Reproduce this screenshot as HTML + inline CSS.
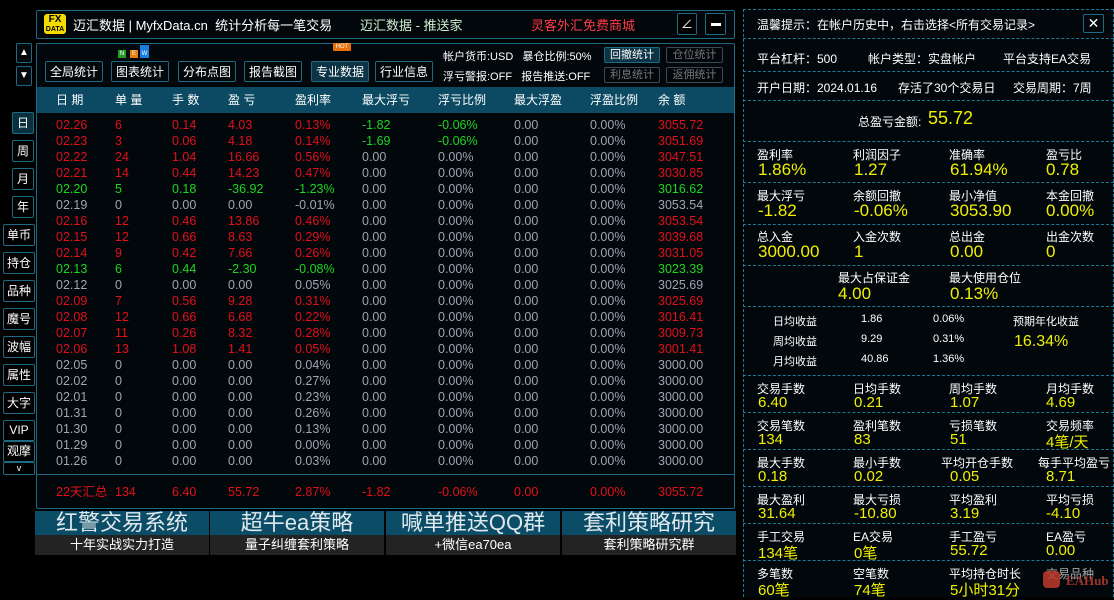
<!DOCTYPE html><html><head><meta charset="utf-8"><style>
*{margin:0;padding:0;box-sizing:border-box}
body{width:1114px;height:597px;background:#000;position:relative;overflow:hidden;font-family:"Liberation Sans","Noto Sans CJK SC",sans-serif;color:#e8eef2;font-size:12px}
.a{position:absolute;white-space:nowrap}
.bx{position:absolute;border:1px solid #1d6a82;border-radius:2px}
.btn{position:absolute;border:1px solid #1d6a82;border-radius:2px;background:#02070b;color:#fff;font-size:12px;text-align:center;line-height:20px}
.tab{position:absolute;border:1px solid #1d6a82;border-radius:2px;background:#000;color:#fff;font-size:12px;text-align:center}
table{position:absolute;left:56px;border-collapse:collapse;table-layout:fixed;font-size:12.5px}
td{height:16px;padding:0;white-space:nowrap;color:#9ba7b2;line-height:16px}
col.c1{width:59px}col.c2{width:57px}col.c3{width:56px}col.c4{width:67px}col.c5{width:67px}col.c6{width:76px}col.c7{width:76px}col.c8{width:76px}col.c9{width:68px}col.c10{width:70px}
tr.r td.k{color:#e3101a}tr.g td.k{color:#1fd61f}
td.gn{color:#1fd61f}
.rp{position:absolute;left:743px;width:371px;border-left:1px dashed #1d7a96;border-right:1px dashed #1d7a96}
.sec{position:absolute;left:743px;width:371px;border-top:1px dashed #1d7a96}
.lb{position:absolute;font-size:12px;color:#fff;white-space:nowrap}
.vl{position:absolute;font-size:17px;color:#f0f000;white-space:nowrap}
.ban{position:absolute;top:511px;width:174px;height:24px;background:#0b4c67;color:#dfe8ec;font-size:22px;text-align:center;line-height:24px}
.sub{position:absolute;top:535px;width:174px;height:20px;background:#232323;color:#fff;font-size:13px;text-align:center;line-height:20px}
</style></head><body>
<div class="bx" style="left:36px;top:10px;width:699px;height:29px;background:#02070b"></div>
<div class="a" style="left:44px;top:14px;width:22px;height:20px;background:#f4dc00;border-radius:3px;color:#000;font-weight:bold;text-align:center;line-height:9px;font-size:10px;padding-top:1px">FX<br><span style="font-size:7px">DATA</span></div>
<div class="a" style="left:73px;top:15px;font-size:13px;color:#fff">迈汇数据 | MyfxData.cn&nbsp; 统计分析每一笔交易</div>
<div class="a" style="left:360px;top:15px;font-size:13px;color:#cfeecf">迈汇数据 - 推送家</div>
<div class="a" style="left:531px;top:15px;font-size:13px;color:#ff3b45">灵客外汇免费商城</div>
<div class="bx" style="left:677px;top:13px;width:20px;height:22px;background:#000;color:#fff;text-align:center;line-height:20px">∠</div>
<div class="bx" style="left:705px;top:13px;width:21px;height:22px;background:#000"><div style="position:absolute;left:5px;top:9px;width:10px;height:3px;background:#fff"></div></div>
<div class="btn" style="left:16px;top:43px;width:16px;height:20px;line-height:18px;font-size:10px">▲</div>
<div class="btn" style="left:16px;top:66px;width:16px;height:20px;line-height:18px;font-size:10px">▼</div>
<div class="bx" style="left:36px;top:43px;width:699px;height:466px;background:#02070b"></div>
<div class="btn" style="left:45px;top:61px;width:58px;height:21px">全局统计</div>
<div class="btn" style="left:111px;top:61px;width:58px;height:21px">图表统计</div>
<div class="btn" style="left:178px;top:61px;width:58px;height:21px">分布点图</div>
<div class="btn" style="left:244px;top:61px;width:58px;height:21px">报告截图</div>
<div class="btn" style="left:311px;top:61px;width:58px;height:21px;background:#0c3444">专业数据</div>
<div class="btn" style="left:375px;top:61px;width:58px;height:21px">行业信息</div>
<div class="a" style="left:118px;top:50px;width:8px;height:8px;background:#2a9a2a;color:#fff;font-size:6px;line-height:8px;text-align:center">N</div>
<div class="a" style="left:130px;top:50px;width:8px;height:8px;background:#e87d10;color:#fff;font-size:6px;line-height:8px;text-align:center">E</div>
<div class="a" style="left:140px;top:45px;width:9px;height:13px;background:#1a7ee0;color:#fff;font-size:6px;line-height:18px;text-align:center">W</div>
<div class="a" style="left:333px;top:43px;width:18px;height:8px;background:#e8700c;color:#fff;font-size:6px;line-height:8px;text-align:center;border-radius:1px">HOT</div>
<div class="a" style="left:443px;top:48px;font-size:11px;color:#fff">帐户货币:USD&nbsp;&nbsp; 暴仓比例:50%</div>
<div class="a" style="left:443px;top:68px;font-size:11px;color:#fff">浮亏警报:OFF&nbsp;&nbsp; 报告推送:OFF</div>
<div class="btn" style="left:604px;top:47px;width:56px;height:16px;line-height:14px;font-size:11px;background:#0c3444">回撤统计</div>
<div class="btn" style="left:666px;top:47px;width:57px;height:16px;line-height:14px;font-size:11px;color:#777;border-color:#3a4a50">仓位统计</div>
<div class="btn" style="left:604px;top:67px;width:56px;height:16px;line-height:14px;font-size:11px;color:#777;border-color:#3a4a50">利息统计</div>
<div class="btn" style="left:666px;top:67px;width:57px;height:16px;line-height:14px;font-size:11px;color:#777;border-color:#3a4a50">返佣统计</div>
<div class="a" style="left:37px;top:87px;width:697px;height:26px;background:#0b4a62"></div>
<table style="top:92px;font-size:12px"><colgroup><col class="c1"><col class="c2"><col class="c3"><col class="c4"><col class="c5"><col class="c6"><col class="c7"><col class="c8"><col class="c9"><col class="c10"></colgroup>
<tr><td style="color:#fff">日 期</td><td style="color:#fff">单 量</td><td style="color:#fff">手 数</td><td style="color:#fff">盈 亏</td><td style="color:#fff">盈利率</td><td style="color:#fff">最大浮亏</td><td style="color:#fff">浮亏比例</td><td style="color:#fff">最大浮盈</td><td style="color:#fff">浮盈比例</td><td style="color:#fff">余 额</td></tr></table>
<table style="top:117px"><colgroup><col class="c1"><col class="c2"><col class="c3"><col class="c4"><col class="c5"><col class="c6"><col class="c7"><col class="c8"><col class="c9"><col class="c10"></colgroup>
<tr class="r"><td class="k">02.26</td><td class="k">6</td><td class="k">0.14</td><td class="k">4.03</td><td class="k">0.13%</td><td class="gn">-1.82</td><td class="gn">-0.06%</td><td>0.00</td><td>0.00%</td><td class="k">3055.72</td></tr>
<tr class="r"><td class="k">02.23</td><td class="k">3</td><td class="k">0.06</td><td class="k">4.18</td><td class="k">0.14%</td><td class="gn">-1.69</td><td class="gn">-0.06%</td><td>0.00</td><td>0.00%</td><td class="k">3051.69</td></tr>
<tr class="r"><td class="k">02.22</td><td class="k">24</td><td class="k">1.04</td><td class="k">16.66</td><td class="k">0.56%</td><td>0.00</td><td>0.00%</td><td>0.00</td><td>0.00%</td><td class="k">3047.51</td></tr>
<tr class="r"><td class="k">02.21</td><td class="k">14</td><td class="k">0.44</td><td class="k">14.23</td><td class="k">0.47%</td><td>0.00</td><td>0.00%</td><td>0.00</td><td>0.00%</td><td class="k">3030.85</td></tr>
<tr class="g"><td class="k">02.20</td><td class="k">5</td><td class="k">0.18</td><td class="k">-36.92</td><td class="k">-1.23%</td><td>0.00</td><td>0.00%</td><td>0.00</td><td>0.00%</td><td class="k">3016.62</td></tr>
<tr><td>02.19</td><td>0</td><td>0.00</td><td>0.00</td><td>-0.01%</td><td>0.00</td><td>0.00%</td><td>0.00</td><td>0.00%</td><td>3053.54</td></tr>
<tr class="r"><td class="k">02.16</td><td class="k">12</td><td class="k">0.46</td><td class="k">13.86</td><td class="k">0.46%</td><td>0.00</td><td>0.00%</td><td>0.00</td><td>0.00%</td><td class="k">3053.54</td></tr>
<tr class="r"><td class="k">02.15</td><td class="k">12</td><td class="k">0.66</td><td class="k">8.63</td><td class="k">0.29%</td><td>0.00</td><td>0.00%</td><td>0.00</td><td>0.00%</td><td class="k">3039.68</td></tr>
<tr class="r"><td class="k">02.14</td><td class="k">9</td><td class="k">0.42</td><td class="k">7.66</td><td class="k">0.26%</td><td>0.00</td><td>0.00%</td><td>0.00</td><td>0.00%</td><td class="k">3031.05</td></tr>
<tr class="g"><td class="k">02.13</td><td class="k">6</td><td class="k">0.44</td><td class="k">-2.30</td><td class="k">-0.08%</td><td>0.00</td><td>0.00%</td><td>0.00</td><td>0.00%</td><td class="k">3023.39</td></tr>
<tr><td>02.12</td><td>0</td><td>0.00</td><td>0.00</td><td>0.05%</td><td>0.00</td><td>0.00%</td><td>0.00</td><td>0.00%</td><td>3025.69</td></tr>
<tr class="r"><td class="k">02.09</td><td class="k">7</td><td class="k">0.56</td><td class="k">9.28</td><td class="k">0.31%</td><td>0.00</td><td>0.00%</td><td>0.00</td><td>0.00%</td><td class="k">3025.69</td></tr>
<tr class="r"><td class="k">02.08</td><td class="k">12</td><td class="k">0.66</td><td class="k">6.68</td><td class="k">0.22%</td><td>0.00</td><td>0.00%</td><td>0.00</td><td>0.00%</td><td class="k">3016.41</td></tr>
<tr class="r"><td class="k">02.07</td><td class="k">11</td><td class="k">0.26</td><td class="k">8.32</td><td class="k">0.28%</td><td>0.00</td><td>0.00%</td><td>0.00</td><td>0.00%</td><td class="k">3009.73</td></tr>
<tr class="r"><td class="k">02.06</td><td class="k">13</td><td class="k">1.08</td><td class="k">1.41</td><td class="k">0.05%</td><td>0.00</td><td>0.00%</td><td>0.00</td><td>0.00%</td><td class="k">3001.41</td></tr>
<tr><td>02.05</td><td>0</td><td>0.00</td><td>0.00</td><td>0.04%</td><td>0.00</td><td>0.00%</td><td>0.00</td><td>0.00%</td><td>3000.00</td></tr>
<tr><td>02.02</td><td>0</td><td>0.00</td><td>0.00</td><td>0.27%</td><td>0.00</td><td>0.00%</td><td>0.00</td><td>0.00%</td><td>3000.00</td></tr>
<tr><td>02.01</td><td>0</td><td>0.00</td><td>0.00</td><td>0.23%</td><td>0.00</td><td>0.00%</td><td>0.00</td><td>0.00%</td><td>3000.00</td></tr>
<tr><td>01.31</td><td>0</td><td>0.00</td><td>0.00</td><td>0.26%</td><td>0.00</td><td>0.00%</td><td>0.00</td><td>0.00%</td><td>3000.00</td></tr>
<tr><td>01.30</td><td>0</td><td>0.00</td><td>0.00</td><td>0.13%</td><td>0.00</td><td>0.00%</td><td>0.00</td><td>0.00%</td><td>3000.00</td></tr>
<tr><td>01.29</td><td>0</td><td>0.00</td><td>0.00</td><td>0.00%</td><td>0.00</td><td>0.00%</td><td>0.00</td><td>0.00%</td><td>3000.00</td></tr>
<tr><td>01.26</td><td>0</td><td>0.00</td><td>0.00</td><td>0.03%</td><td>0.00</td><td>0.00%</td><td>0.00</td><td>0.00%</td><td>3000.00</td></tr>
</table>
<div class="a" style="left:37px;top:474px;width:697px;border-top:1px solid #1d6a82"></div>
<table style="top:484px"><colgroup><col class="c1"><col class="c2"><col class="c3"><col class="c4"><col class="c5"><col class="c6"><col class="c7"><col class="c8"><col class="c9"><col class="c10"></colgroup>
<tr class="r"><td class="k">22天汇总</td><td class="k">134</td><td class="k">6.40</td><td class="k">55.72</td><td class="k">2.87%</td><td class="k">-1.82</td><td class="k">-0.06%</td><td class="k">0.00</td><td class="k">0.00%</td><td class="k">3055.72</td></tr></table>
<div class="tab" style="left:12px;top:112px;width:22px;height:22px;line-height:20px;background:#0a3040">日</div>
<div class="tab" style="left:12px;top:140px;width:22px;height:22px;line-height:20px">周</div>
<div class="tab" style="left:12px;top:168px;width:22px;height:22px;line-height:20px">月</div>
<div class="tab" style="left:12px;top:196px;width:22px;height:22px;line-height:20px">年</div>
<div class="tab" style="left:3px;top:224px;width:32px;height:22px;line-height:20px">单币</div>
<div class="tab" style="left:3px;top:252px;width:32px;height:22px;line-height:20px">持仓</div>
<div class="tab" style="left:3px;top:280px;width:32px;height:22px;line-height:20px">品种</div>
<div class="tab" style="left:3px;top:308px;width:32px;height:22px;line-height:20px">魔号</div>
<div class="tab" style="left:3px;top:336px;width:32px;height:22px;line-height:20px">波幅</div>
<div class="tab" style="left:3px;top:364px;width:32px;height:22px;line-height:20px">属性</div>
<div class="tab" style="left:3px;top:392px;width:32px;height:22px;line-height:20px">大字</div>
<div class="tab" style="left:3px;top:420px;width:32px;height:21px;line-height:19px">VIP</div>
<div class="tab" style="left:3px;top:441px;width:32px;height:21px;line-height:19px">观摩</div>
<div class="tab" style="left:3px;top:462px;width:32px;height:13px;line-height:10px;font-size:9px">v</div>
<div class="ban" style="left:35px">红警交易系统</div><div class="sub" style="left:35px">十年实战实力打造</div>
<div class="ban" style="left:210px">超牛ea策略</div><div class="sub" style="left:210px">量子纠缠套利策略</div>
<div class="ban" style="left:386px">喊单推送QQ群</div><div class="sub" style="left:386px">+微信ea70ea</div>
<div class="ban" style="left:562px">套利策略研究</div><div class="sub" style="left:562px">套利策略研究群</div>
<div class="rp" style="top:9px;height:588px;background:#02070b"></div>
<div class="sec" style="top:9px"></div>
<div class="lb" style="left:757px;top:16px">温馨提示：在帐户历史中，右击选择&lt;所有交易记录&gt;</div>
<div class="bx" style="left:1083px;top:14px;width:21px;height:19px;color:#fff;text-align:center;line-height:17px;font-size:14px">✕</div>
<div class="sec" style="top:38px"></div>
<div class="lb" style="left:757px;top:50px">平台杠杆：500</div>
<div class="lb" style="left:868px;top:50px">帐户类型：实盘帐户</div>
<div class="lb" style="left:1003px;top:50px">平台支持EA交易</div>
<div class="sec" style="top:71px"></div>
<div class="lb" style="left:757px;top:79px">开户日期：2024.01.16</div>
<div class="lb" style="left:898px;top:79px">存活了30个交易日</div>
<div class="lb" style="left:1013px;top:79px">交易周期：7周</div>
<div class="sec" style="top:100px"></div>
<div class="lb" style="left:858px;top:113px">总盈亏金额:</div>
<div class="vl" style="left:928px;top:108px;font-size:18px">55.72</div>
<div class="sec" style="top:141px"></div>
<div class="lb" style="left:757px;top:146px">盈利率</div><div class="vl" style="left:758px;top:160px">1.86%</div>
<div class="lb" style="left:853px;top:146px">利润因子</div><div class="vl" style="left:854px;top:160px">1.27</div>
<div class="lb" style="left:949px;top:146px">准确率</div><div class="vl" style="left:950px;top:160px">61.94%</div>
<div class="lb" style="left:1046px;top:146px">盈亏比</div><div class="vl" style="left:1046px;top:160px">0.78</div>
<div class="sec" style="top:182px"></div>
<div class="lb" style="left:757px;top:187px">最大浮亏</div><div class="vl" style="left:758px;top:201px">-1.82</div>
<div class="lb" style="left:853px;top:187px">余额回撤</div><div class="vl" style="left:854px;top:201px">-0.06%</div>
<div class="lb" style="left:949px;top:187px">最小净值</div><div class="vl" style="left:950px;top:201px">3053.90</div>
<div class="lb" style="left:1046px;top:187px">本金回撤</div><div class="vl" style="left:1046px;top:201px">0.00%</div>
<div class="sec" style="top:224px"></div>
<div class="lb" style="left:757px;top:228px">总入金</div><div class="vl" style="left:758px;top:242px">3000.00</div>
<div class="lb" style="left:853px;top:228px">入金次数</div><div class="vl" style="left:854px;top:242px">1</div>
<div class="lb" style="left:949px;top:228px">总出金</div><div class="vl" style="left:950px;top:242px">0.00</div>
<div class="lb" style="left:1046px;top:228px">出金次数</div><div class="vl" style="left:1046px;top:242px">0</div>
<div class="sec" style="top:265px"></div>
<div class="lb" style="left:838px;top:269px">最大占保证金</div><div class="vl" style="left:838px;top:284px">4.00</div>
<div class="lb" style="left:949px;top:269px">最大使用仓位</div><div class="vl" style="left:950px;top:284px">0.13%</div>
<div class="sec" style="top:306px"></div>
<div class="lb" style="left:773px;top:313px;font-size:11px">日均收益</div><div class="lb" style="left:861px;top:313px;font-size:11px">1.86</div><div class="lb" style="left:933px;top:313px;font-size:11px">0.06%</div>
<div class="lb" style="left:773px;top:333px;font-size:11px">周均收益</div><div class="lb" style="left:861px;top:333px;font-size:11px">9.29</div><div class="lb" style="left:933px;top:333px;font-size:11px">0.31%</div>
<div class="lb" style="left:773px;top:353px;font-size:11px">月均收益</div><div class="lb" style="left:861px;top:353px;font-size:11px">40.86</div><div class="lb" style="left:933px;top:353px;font-size:11px">1.36%</div>
<div class="lb" style="left:1013px;top:313px;font-size:11px">预期年化收益</div><div class="vl" style="left:1014px;top:333px;font-size:16px">16.34%</div>
<div class="sec" style="top:375px"></div>
<div class="lb" style="left:757px;top:380px">交易手数</div><div class="vl" style="left:758px;top:394px;font-size:15px">6.40</div>
<div class="lb" style="left:853px;top:380px">日均手数</div><div class="vl" style="left:854px;top:394px;font-size:15px">0.21</div>
<div class="lb" style="left:949px;top:380px">周均手数</div><div class="vl" style="left:950px;top:394px;font-size:15px">1.07</div>
<div class="lb" style="left:1046px;top:380px">月均手数</div><div class="vl" style="left:1046px;top:394px;font-size:15px">4.69</div>
<div class="sec" style="top:412px"></div>
<div class="lb" style="left:757px;top:417px">交易笔数</div><div class="vl" style="left:758px;top:431px;font-size:15px">134</div>
<div class="lb" style="left:853px;top:417px">盈利笔数</div><div class="vl" style="left:854px;top:431px;font-size:15px">83</div>
<div class="lb" style="left:949px;top:417px">亏损笔数</div><div class="vl" style="left:950px;top:431px;font-size:15px">51</div>
<div class="lb" style="left:1046px;top:417px">交易频率</div><div class="vl" style="left:1046px;top:431px;font-size:15px">4笔/天</div>
<div class="sec" style="top:449px"></div>
<div class="lb" style="left:757px;top:454px">最大手数</div><div class="vl" style="left:758px;top:468px;font-size:15px">0.18</div>
<div class="lb" style="left:853px;top:454px">最小手数</div><div class="vl" style="left:854px;top:468px;font-size:15px">0.02</div>
<div class="lb" style="left:941px;top:454px">平均开仓手数</div><div class="vl" style="left:950px;top:468px;font-size:15px">0.05</div>
<div class="lb" style="left:1038px;top:454px">每手平均盈亏</div><div class="vl" style="left:1046px;top:468px;font-size:15px">8.71</div>
<div class="sec" style="top:486px"></div>
<div class="lb" style="left:757px;top:491px">最大盈利</div><div class="vl" style="left:758px;top:505px;font-size:15px">31.64</div>
<div class="lb" style="left:853px;top:491px">最大亏损</div><div class="vl" style="left:854px;top:505px;font-size:15px">-10.80</div>
<div class="lb" style="left:949px;top:491px">平均盈利</div><div class="vl" style="left:950px;top:505px;font-size:15px">3.19</div>
<div class="lb" style="left:1046px;top:491px">平均亏损</div><div class="vl" style="left:1046px;top:505px;font-size:15px">-4.10</div>
<div class="sec" style="top:523px"></div>
<div class="lb" style="left:757px;top:528px">手工交易</div><div class="vl" style="left:758px;top:542px;font-size:15px">134笔</div>
<div class="lb" style="left:853px;top:528px">EA交易</div><div class="vl" style="left:854px;top:542px;font-size:15px">0笔</div>
<div class="lb" style="left:949px;top:528px">手工盈亏</div><div class="vl" style="left:950px;top:542px;font-size:15px">55.72</div>
<div class="lb" style="left:1046px;top:528px">EA盈亏</div><div class="vl" style="left:1046px;top:542px;font-size:15px">0.00</div>
<div class="sec" style="top:560px"></div>
<div class="lb" style="left:757px;top:565px">多笔数</div><div class="vl" style="left:758px;top:579px;font-size:15px">60笔</div>
<div class="lb" style="left:853px;top:565px">空笔数</div><div class="vl" style="left:854px;top:579px;font-size:15px">74笔</div>
<div class="lb" style="left:949px;top:565px">平均持仓时长</div><div class="vl" style="left:950px;top:579px;font-size:15px">5小时31分</div>
<div class="lb" style="left:1046px;top:565px;color:#aaa">交易品种</div>
<div class="a" style="left:1043px;top:571px;width:17px;height:17px;background:#c0392b;border-radius:4px;opacity:.85"></div>
<div class="a" style="left:1066px;top:573px;font-size:13px;font-weight:bold;color:#a0352a;font-family:'Liberation Serif',serif">EAHub</div>
</body></html>
